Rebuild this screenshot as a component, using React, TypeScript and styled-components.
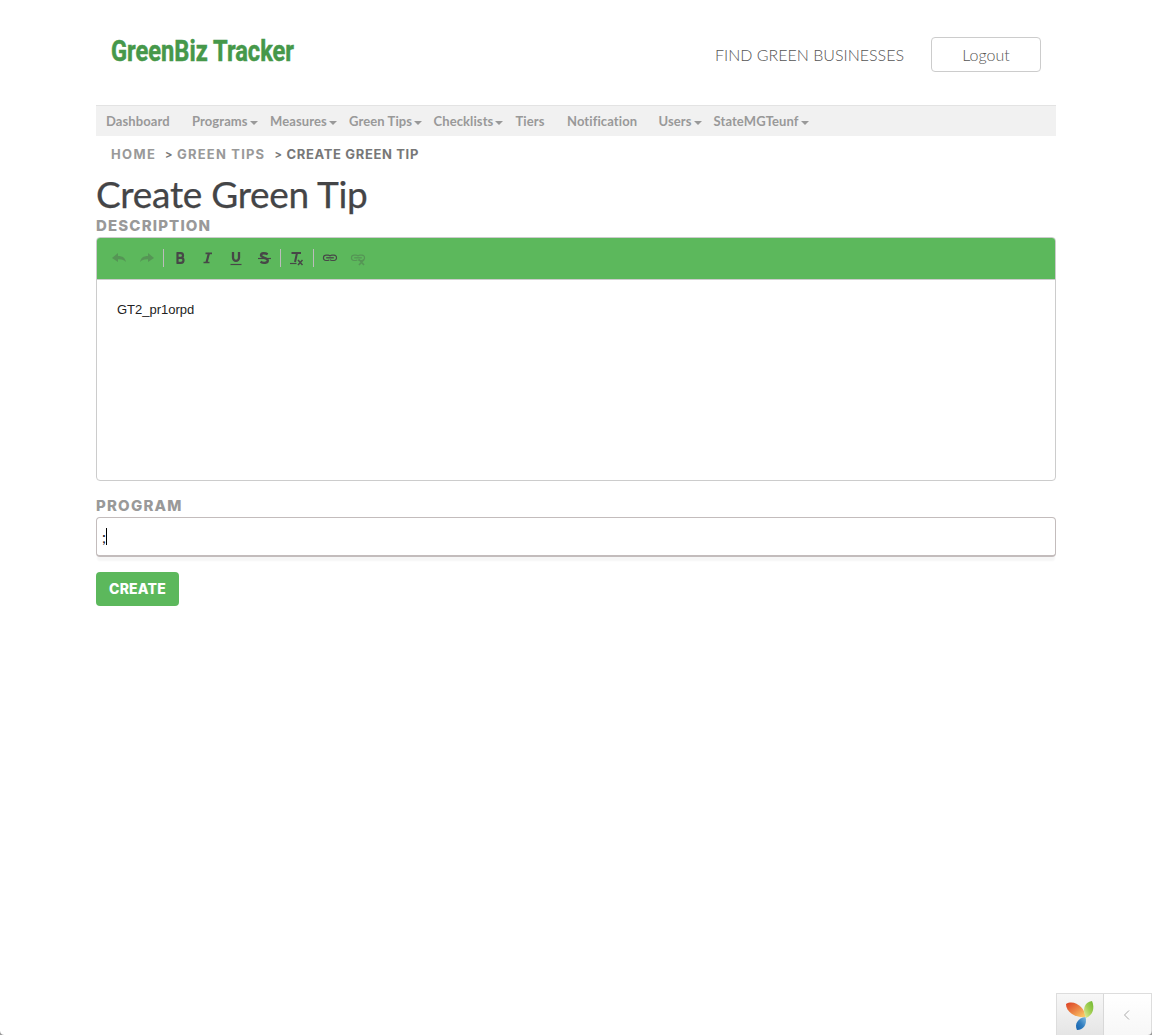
import React from "react";
import styled, { createGlobalStyle } from "styled-components";

const GlobalStyle = createGlobalStyle`
  *, *::before, *::after { box-sizing: border-box; }
  body { margin: 0; background: #fff; color: #444547; font-family: Lato, sans-serif; overflow: hidden; }
`;

const Page = styled.div`
  width: 960px;
  height: 1035px;
  margin: 0 auto;
`;

const Header = styled.header`
  display: flex;
  align-items: flex-start;
  justify-content: space-between;
  height: 105px;
  padding: 32px 15px 0;
`;

const Logo = styled.svg`
  display: block;
  width: 190px;
  height: 42px;
  overflow: visible;
  font: 700 29px Roboto, sans-serif;
  fill: #46984a;
  stroke: #46984a;
  stroke-width: 0.5px;
`;

const Actions = styled.div`
  display: flex;
  align-items: flex-start;
  gap: 27px;
  padding-top: 5px;
`;

const FindLink = styled.a`
  font-size: 16px;
  font-weight: 300;
  color: #555;
  line-height: 36px;
`;

const Logout = styled.button`
  width: 110px;
  height: 35px;
  padding: 0 0 1px;
  border: 1px solid #ccc;
  border-radius: 4px;
  background: #fff;
  color: #555;
  font: 300 16px Lato, sans-serif;
`;

const Nav = styled.nav`
  display: flex;
  align-items: center;
  height: 31px;
  padding: 0 0 0 10px;
  border-top: 1px solid #e3e3e3;
  background: #f1f1f1;
`;

const NavItem = styled.a<{ $width: number }>`
  display: flex;
  align-items: center;
  flex: 0 0 ${(p) => p.$width}px;
  color: #999;
  font-size: 13px;
  font-weight: 700;
  line-height: 28px;
  letter-spacing: 0.1px;
  white-space: nowrap;
`;

const Caret = styled.span`
  margin: 3px 0 0 2px;
  border-top: 4px solid #999;
  border-left: 4px solid transparent;
  border-right: 4px solid transparent;
`;

const Breadcrumb = styled.div`
  display: flex;
  height: 38px;
  padding: 0 15px;
  font: 700 13px/37px Inter, sans-serif;
  color: #777;
`;

const Crumb = styled.span<{ $width: number; $muted?: boolean; $spacing: number }>`
  flex: 0 0 ${(p) => p.$width}px;
  color: ${(p) => (p.$muted ? "#999" : "#777")};
  letter-spacing: ${(p) => p.$spacing}px;
  white-space: nowrap;
`;

const Separator = styled.span`
  flex: 0 0 12px;
  font-size: 11px;
`;

const Title = styled.h1`
  margin: 0;
  height: 43px;
  font-size: 37px;
  font-weight: 400;
  line-height: 39px;
  letter-spacing: -0.28px;
  color: #444547;
  -webkit-text-stroke: 0.25px #444547;
`;

const Label = styled.label<{ $spacing: number }>`
  display: block;
  height: 20px;
  font: 800 15px/18px Inter, sans-serif;
  letter-spacing: ${(p) => p.$spacing}px;
  color: #999;
`;

const Editor = styled.section`
  height: 244px;
  margin-bottom: 16px;
  border: 1px solid #ccc;
  border-radius: 4px;
  overflow: hidden;
`;

const Toolbar = styled.div`
  display: flex;
  align-items: center;
  height: 42px;
  padding: 0 0 1px 8px;
  border-bottom: 1px solid #ccc;
  background: #5cb85c;
`;

const Tool = styled.span<{ $off?: boolean }>`
  display: flex;
  width: 28px;
  height: 18px;
  justify-content: center;
  opacity: ${(p) => (p.$off ? 0.3 : 1)};
`;

const Divider = styled.i`
  width: 1px;
  height: 18px;
  margin: 0 2px;
  background: #bcbcbc;
`;

const EditorText = styled.div`
  padding: 22px 20px;
  color: #222;
  font: 13px/16px "Liberation Sans", Arial, sans-serif;
`;

const Field = styled.div`
  display: flex;
  align-items: center;
  height: 40px;
  margin-bottom: 15px;
  padding-left: 5px;
  border: 1px solid #c3bcbc;
  border-bottom-width: 2px;
  border-radius: 4px;
  box-shadow: 0 5px 2px -1px #f6f6f6;
  color: #112;
  font-size: 15px;
`;

const TextCursor = styled.i`
  width: 1px;
  height: 17px;
  background: #000;
`;

const Create = styled.button`
  display: block;
  width: 83px;
  height: 34px;
  padding: 0 0 1px;
  border: 0;
  border-radius: 4px;
  background: #5cb85c;
  color: #fff;
  font: 800 14px Inter, sans-serif;
  letter-spacing: 0.2px;
`;

const DebugBar = styled.aside`
  position: fixed;
  right: 0;
  bottom: 0;
  display: flex;
  width: 96px;
  height: 42px;
  border: 1px solid #ddd;
  border-bottom: 0;
`;

const DebugCell = styled.div<{ $logo?: boolean }>`
  display: flex;
  flex: ${(p) => (p.$logo ? "0 0 47px" : "1")};
  align-items: center;
  justify-content: center;
  padding-right: ${(p) => (p.$logo ? 0 : 2)}px;
  border-right: ${(p) => (p.$logo ? "1px solid #d8d8d8" : "0")};
  background: ${(p) => (p.$logo ? "linear-gradient(#f7f7f7, #e5e5e5)" : "linear-gradient(#fff, #f7f7f7)")};
`;

const WindowCorner = styled.i<{ $side: "left" | "right" }>`
  position: fixed;
  bottom: 0;
  ${(p) => p.$side}: 0;
  width: 4px;
  height: 4px;
  background: radial-gradient(circle at ${(p) => (p.$side === "left" ? "100%" : "0")} 0, transparent 3.4px, #999 4.4px);
`;

const items: { label: string; width: number; menu?: boolean }[] = [
  { label: "Dashboard", width: 86 },
  { label: "Programs", width: 78, menu: true },
  { label: "Measures", width: 79, menu: true },
  { label: "Green Tips", width: 84.5, menu: true },
  { label: "Checklists", width: 82, menu: true },
  { label: "Tiers", width: 51.5 },
  { label: "Notification", width: 91.5 },
  { label: "Users", width: 55, menu: true },
  { label: "StateMGTeunf", width: 100, menu: true },
];

const Icon = ({ children }: { children: React.ReactNode }) => (
  <svg width="18" height="18" viewBox="0 0 18 18" fill="none" stroke="#474747" strokeWidth="1.8">
    {children}
  </svg>
);

const Arrow = () => (
  <path d="M2 9 8 4v3c5 0 7 2 8 6-2-2.2-4-3-8-2.8V13Z" fill="#474747" stroke="none" />
);

const Chain = () => (
  <>
    <path d="M8.2 10.9a2.4 2.4 0 0 1-1.2.6H5a2.5 2.5 0 0 1-2.5-3A2.5 2.5 0 0 1 5 6.1h2.2c.7 0 1.3.4 1.8.8.5-.4 1.1-.8 1.8-.8H13a2.5 2.5 0 0 1 2.5 2.7A2.5 2.5 0 0 1 13 11.5h-2.2c-.7 0-1.3-.3-1.8-.8" strokeWidth="1.2" />
    <path d="M5.2 8.8h7.6" strokeWidth="1.3" />
  </>
);

export default function App() {
  return (
    <>
      <GlobalStyle />
      <Page>
        <Header>
          <Logo viewBox="0 0 190 42">
            <text x="0" y="29" textLength="183" lengthAdjust="spacingAndGlyphs">GreenBiz Tracker</text>
          </Logo>
          <Actions>
            <FindLink>FIND GREEN BUSINESSES</FindLink>
            <Logout>Logout</Logout>
          </Actions>
        </Header>
        <Nav>
          {items.map((item) => (
            <NavItem key={item.label} $width={item.width}>
              {item.label}
              {item.menu && <Caret />}
            </NavItem>
          ))}
        </Nav>
        <Breadcrumb>
          <Crumb $width={54} $spacing={1.4} $muted>HOME</Crumb>
          <Separator>&gt;</Separator>
          <Crumb $width={97.5} $spacing={1.2} $muted>GREEN TIPS</Crumb>
          <Separator>&gt;</Separator>
          <Crumb $width={133} $spacing={0.65}>CREATE GREEN TIP</Crumb>
        </Breadcrumb>
        <Title>Create Green Tip</Title>
        <Label $spacing={1.15}>DESCRIPTION</Label>
        <Editor>
          <Toolbar>
            <Tool $off><Icon><Arrow /></Icon></Tool>
            <Tool $off><Icon><g transform="translate(18 0) scale(-1 1)"><Arrow /></g></Icon></Tool>
            <Divider />
            <Tool><Icon><path d="M5.5 4.2h4.2a2.2 2.2 0 0 1 0 4.6H5.5M5.5 8.8H10a2.5 2.5 0 0 1 0 5H5.5M6.5 4v10" strokeWidth="2.2" /></Icon></Tool>
            <Tool><Icon><path d="M6.5 4.4h6.5M4.5 13.5h6" strokeWidth="1.6" /><path d="M10 4 7.5 13.5" strokeWidth="2.2" /></Icon></Tool>
            <Tool><Icon><path d="M6 3v5.8a3 3 0 0 0 6 0V3" strokeWidth="2.3" /><path d="M3.5 15.5h11" strokeWidth="1.2" /></Icon></Tool>
            <Tool><Icon><path d="M12.7 5.2C10 3.7 6 3.7 6 6.3s6.8 2.4 6.8 5.1-4.3 3.1-7.3 1.4" strokeWidth="2.4" /><path d="M3 9.5h13" strokeWidth="1.2" /></Icon></Tool>
            <Divider />
            <Tool><Icon><path d="M3.5 4h9.5M9 4 7 13" strokeWidth="2" /><path d="M2 14.5h6.5" strokeWidth="1.2" /><path d="m10 11 4.5 5M14.5 11 10 16" strokeWidth="1.5" /></Icon></Tool>
            <Divider />
            <Tool><Icon><Chain /></Icon></Tool>
            <Tool $off><Icon><Chain /><path d="m10 10.5 5 5.5M15 10.5 10 16" strokeWidth="1.6" /></Icon></Tool>
          </Toolbar>
          <EditorText>GT2_pr1orpd</EditorText>
        </Editor>
        <Label $spacing={1.2}>PROGRAM</Label>
        <Field>;<TextCursor /></Field>
        <Create>CREATE</Create>
      </Page>
      <DebugBar>
        <DebugCell $logo>
          <svg width="30" height="32" viewBox="0 0 30 32">
            <defs>
              <linearGradient id="orange" x1="0" y1="0" x2="1" y2="1"><stop stopColor="#dc3f24" /><stop offset=".55" stopColor="#ed8b48" /><stop offset="1" stopColor="#ffd46b" /></linearGradient>
              <linearGradient id="green" x1="1" y1="0" x2="0" y2="1"><stop stopColor="#6db72d" /><stop offset=".5" stopColor="#a3cf55" /><stop offset="1" stopColor="#e8efa4" /></linearGradient>
              <linearGradient id="blue" x1="0" y1="1" x2="1" y2="0"><stop stopColor="#1261ae" /><stop offset=".5" stopColor="#337fc0" /><stop offset="1" stopColor="#83bde1" /></linearGradient>
            </defs>
            <path d="M1 5C6 2 12 4 16 8c3 3 4 6 4.500 10C12 19 1 14 1 5Z" fill="url(#orange)" />
            <path d="M27 2c3 7 1 14-6 17-4-8-2-16 6-17Z" fill="url(#green)" />
            <path d="M20.500 18c2 7-2 13-8.500 13-3-6 1-12 8.500-13Z" fill="url(#blue)" />
          </svg>
        </DebugCell>
        <DebugCell>
          <svg width="8" height="12" viewBox="0 0 8 12" fill="none" stroke="#aaa"><path d="M6 1.500 1.500 6 6 10.500" /></svg>
        </DebugCell>
      </DebugBar>
      <WindowCorner $side="left" />
      <WindowCorner $side="right" />
    </>
  );
}
